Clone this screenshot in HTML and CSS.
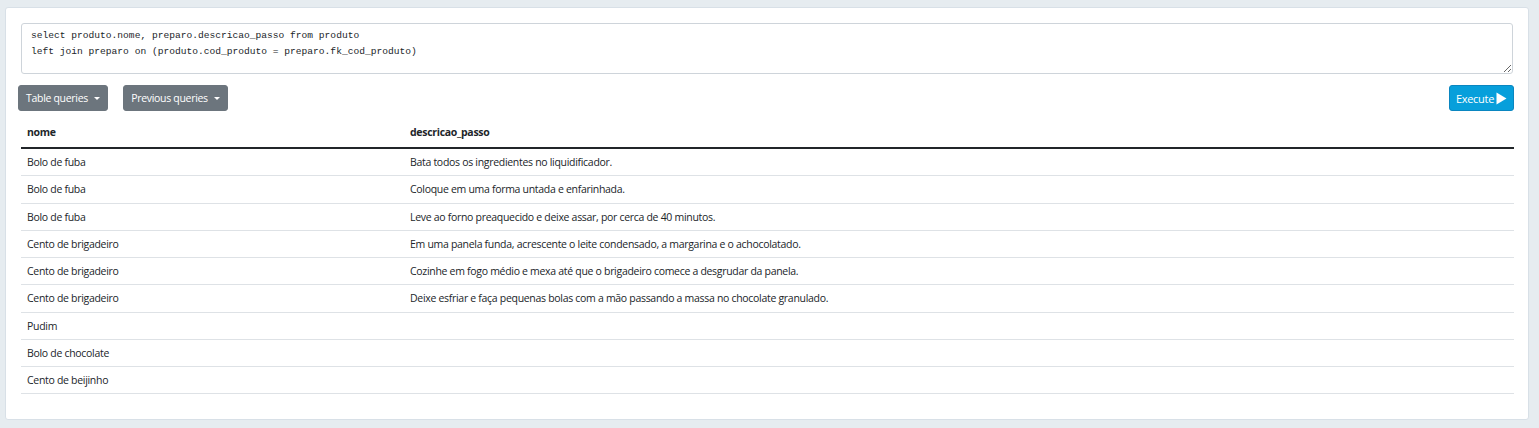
FILE: index.html
```html
<!DOCTYPE html>
<html>
<head>
<meta charset="utf-8">
<link rel="stylesheet" href="styles.css">
</head>
<body>
<div class="card">
  <textarea class="editor" spellcheck="false">select produto.nome, preparo.descricao_passo from produto
left join preparo on (produto.cod_produto = preparo.fk_cod_produto)</textarea>
  <div class="toolbar">
    <div class="left-tools">
      <button class="btn btn-gray btn-table">Table queries <span class="caret"></span></button>
      <button class="btn btn-gray btn-prev">Previous queries <span class="caret"></span></button>
    </div>
    <button class="btn btn-blue">Execute <svg class="play" width="11" height="13" viewBox="0 0 11 13"><path d="M0.5 0.5 L10.5 6.5 L0.5 12.5 Z" fill="#fff"/></svg></button>
  </div>
  <table class="results">
    <thead>
      <tr><th class="c1">nome</th><th>descricao_passo</th></tr>
    </thead>
    <tbody>
      <tr><td>Bolo de fuba</td><td>Bata todos os ingredientes no liquidificador.</td></tr>
      <tr><td>Bolo de fuba</td><td>Coloque em uma forma untada e enfarinhada.</td></tr>
      <tr><td>Bolo de fuba</td><td>Leve ao forno preaquecido e deixe assar, por cerca de 40 minutos.</td></tr>
      <tr><td>Cento de brigadeiro</td><td>Em uma panela funda, acrescente o leite condensado, a margarina e o achocolatado.</td></tr>
      <tr><td>Cento de brigadeiro</td><td>Cozinhe em fogo médio e mexa até que o brigadeiro comece a desgrudar da panela.</td></tr>
      <tr><td>Cento de brigadeiro</td><td>Deixe esfriar e faça pequenas bolas com a mão passando a massa no chocolate granulado.</td></tr>
      <tr><td>Pudim</td><td></td></tr>
      <tr><td>Bolo de chocolate</td><td></td></tr>
      <tr><td>Cento de beijinho</td><td></td></tr>
    </tbody>
  </table>
</div>
</body>
</html>
```
FILE: styles.css
```css
html, body {
  margin: 0;
  padding: 0;
}
body {
  background: #e6ecf0;
  font-family: "Open Sans", "Noto Sans", sans-serif;
  color: #212529;
  padding: 7px 10px 0 5px;
  height: 428px;
  box-sizing: border-box;
  overflow: hidden;
}
.card {
  background: #fff;
  border: 1px solid #d8e0e7;
  border-radius: 3px;
  padding: 15px 14px 26px 12px;
  height: 413px;
  box-sizing: border-box;
}
.editor {
  display: block;
  box-sizing: border-box;
  width: calc(100% - 4px);
  margin-left: 3px;
  height: 51px;
  border: 1px solid #ced4da;
  border-radius: 3px;
  padding: 4px 9px 3px;
  font-family: "Liberation Mono", "DejaVu Sans Mono", monospace;
  font-size: 9.6px;
  line-height: 16px;
  color: #212529;
  resize: vertical;
  outline: none;
}
.toolbar {
  display: flex;
  justify-content: space-between;
  align-items: center;
  margin-top: 11px;
}
.left-tools {
  display: flex;
  gap: 15px;
}
.btn {
  height: 26px;
  border-radius: 3px;
  font-family: "Open Sans", "Noto Sans", sans-serif;
  font-size: 10.5px;
  color: #fff;
  padding: 0;
  display: inline-flex;
  align-items: center;
  justify-content: center;
  white-space: nowrap;
  letter-spacing: -0.3px;
}
.btn-gray {
  background: #6c757d;
  border: 1px solid #6c757d;
}
.btn-table { width: 90px; }
.btn-prev { width: 105px; }
.caret {
  display: inline-block;
  width: 0;
  height: 0;
  border-left: 3px solid transparent;
  border-right: 3px solid transparent;
  border-top: 3px solid #fff;
  margin-left: 6px;
  margin-top: 1px;
}
.btn-blue {
  background: #079fdb;
  border: 1px solid #0a86c0;
  width: 65px;
  font-size: 11px;
  gap: 2px;
}
.play { display: block; }
.results {
  width: calc(100% - 3px);
  margin-left: 3px;
  margin-top: 6px;
  border-collapse: collapse;
  font-size: 10.5px;
}
.results th {
  text-align: left;
  font-weight: 700;
  height: 30px;
  padding: 0 6px;
  border-bottom: 2px solid #212529;
  letter-spacing: -0.3px;
}
.results th.c1 { width: 371px; }
.results td {
  height: 26.25px;
  padding: 0 6px;
  border-bottom: 1px solid #dee2e6;
  letter-spacing: -0.3px;
}
```
